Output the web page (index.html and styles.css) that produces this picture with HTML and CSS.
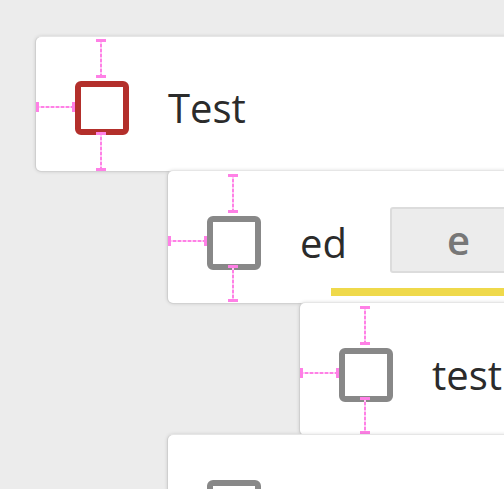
FILE: index.html
```html
<!DOCTYPE html>
<html>
<head>
<meta charset="utf-8">
<link rel="stylesheet" href="styles.css">
</head>
<body>
<div class="tree">
  <div class="row row-first level-0">
    <div class="line">
      <div class="check check-active">
        <span class="guide guide-top"></span>
        <span class="guide guide-left"></span>
        <span class="guide guide-bottom"></span>
      </div>
      <span class="label">Test</span>
    </div>
  </div>
  <div class="row level-1">
    <div class="line">
      <div class="check">
        <span class="guide guide-top"></span>
        <span class="guide guide-left"></span>
        <span class="guide guide-bottom"></span>
      </div>
      <span class="label">ed</span>
      <button class="tag">e</button>
    </div>
    <div class="progress"></div>
  </div>
  <div class="row level-2">
    <div class="line">
      <div class="check">
        <span class="guide guide-top"></span>
        <span class="guide guide-left"></span>
        <span class="guide guide-bottom"></span>
      </div>
      <span class="label">test</span>
    </div>
  </div>
  <div class="row level-1">
    <div class="line">
      <div class="check"></div>
    </div>
  </div>
</div>
</body>
</html>
```

FILE: styles.css
```css
html, body {
  margin: 0;
  padding: 0;
  overflow: hidden;
  background: #ececec;
}

.tree {
  padding: 37px 0 0 36px;
  font-family: "Open Sans", "Noto Sans", sans-serif;
}

.row {
  position: relative;
  box-sizing: border-box;
  height: 132px;
  padding-top: 45px;
  margin-right: -80px;
  background: #ffffff;
  border-radius: 5px;
  box-shadow: -1px 0 0 #cfcfcf, 0 1px 0 #d2d2d2, 0 -1px 0 #e6e6e6, 0 0 4px rgba(0, 0, 0, 0.2);
}

.row-first {
  height: 134px;
  padding-top: 44px;
}

.level-0 { margin-left: 0; }
.level-1 { margin-left: 132px; }
.level-2 { margin-left: 264px; }

.line {
  display: flex;
  align-items: center;
  height: 54px;
}

.check {
  position: relative;
  flex: none;
  box-sizing: border-box;
  width: 54px;
  height: 54px;
  margin-left: 39px;
  border: 6px solid #888888;
  border-radius: 6px;
  background: #ffffff;
}

.check-active {
  border-color: #b32f2b;
}

.guide {
  position: absolute;
  display: block;
}

.guide-top,
.guide-bottom {
  left: 19px;
  width: 2px;
  background: repeating-linear-gradient(to bottom, #ff80e6 0 3px, #ffc9f4 3px 5px);
}

.guide-top {
  top: -48px;
  height: 39px;
}

.guide-bottom {
  top: 43px;
  height: 37px;
}

.row-first .guide-bottom {
  top: 45px;
  height: 39px;
}

.guide-left {
  top: 18px;
  left: -45px;
  width: 39px;
  height: 2px;
  background: repeating-linear-gradient(to right, #ff80e6 0 3px, #ffc9f4 3px 5px);
}

.row-first .guide-left {
  top: 19px;
}

.guide-top::before,
.guide-top::after,
.guide-bottom::before,
.guide-bottom::after {
  content: "";
  position: absolute;
  left: -4px;
  width: 10px;
  height: 3px;
  background: #ff80e6;
}

.guide-top::before,
.guide-bottom::before { top: 0; }
.guide-top::after,
.guide-bottom::after { bottom: 0; }

.guide-left::before,
.guide-left::after {
  content: "";
  position: absolute;
  top: -4px;
  width: 3px;
  height: 10px;
  background: #ff80e6;
}

.guide-left::before { left: 0; }
.guide-left::after { right: 0; }

.label {
  margin-left: 39px;
  font-size: 40px;
  line-height: 54px;
  color: #2b2b2b;
}

.tag {
  flex: none;
  box-sizing: border-box;
  height: 66px;
  margin: 0 0 6px 43px;
  padding: 0 55px;
  border: 2px solid #dcdcdc;
  border-radius: 3px;
  background: #ececec;
  font-family: "Open Sans", "Noto Sans", sans-serif;
  font-size: 40px;
  font-weight: 600;
  line-height: 60px;
  color: #777777;
}

.progress {
  position: absolute;
  left: 163px;
  right: 0;
  top: 117px;
  height: 8px;
  background: #efd94b;
}
```
